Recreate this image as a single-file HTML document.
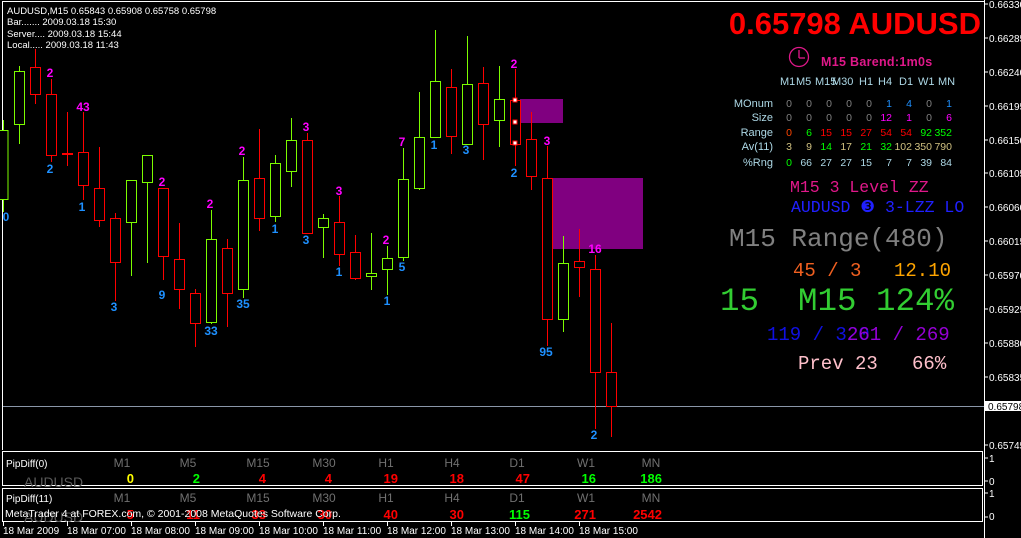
<!DOCTYPE html>
<html><head><meta charset="utf-8"><style>
html,body{margin:0;padding:0;background:#000;}
body{width:1021px;height:538px;overflow:hidden;position:relative;}
svg{position:absolute;left:0;top:0;}
text{font-family:"Liberation Sans",sans-serif;}
.m{font-family:"Liberation Mono",monospace;}
</style></head><body>
<svg width="1021" height="538" viewBox="0 0 1021 538" xmlns="http://www.w3.org/2000/svg">
<rect width="1021" height="538" fill="#000"/>
<line x1="2.5" y1="1" x2="2.5" y2="450" stroke="#fff"/>
<line x1="2" y1="1.5" x2="984" y2="1.5" stroke="#fff"/>
<line x1="984.5" y1="0" x2="984.5" y2="538" stroke="#fff"/>
<rect x="520" y="99" width="43" height="24" fill="#800080"/>
<rect x="553" y="178" width="90" height="71" fill="#800080"/>
<line x1="3" y1="406.5" x2="984" y2="406.5" stroke="#8a96a8"/>
<g id="candles" stroke-width="1" fill="#000">
<g stroke="#7cfc00">
<line x1="3.5" y1="120" x2="3.5" y2="212"/><rect x="-2" y="130.5" width="10" height="69"/>
<line x1="19.5" y1="66" x2="19.5" y2="144"/><rect x="14.5" y="71.5" width="10" height="53"/>
<line x1="131.5" y1="203" x2="131.5" y2="276"/><rect x="126.5" y="180.5" width="10" height="42"/>
<line x1="147.5" y1="183" x2="147.5" y2="263"/><rect x="142.5" y="155.5" width="10" height="27"/>
<line x1="211.5" y1="210" x2="211.5" y2="324"/><rect x="206.5" y="239.5" width="10" height="83"/>
<line x1="243.5" y1="157" x2="243.5" y2="298"/><rect x="238.5" y="180.5" width="10" height="109"/>
<line x1="275.5" y1="155" x2="275.5" y2="222"/><rect x="270.5" y="163.5" width="10" height="53"/>
<line x1="291.5" y1="118" x2="291.5" y2="187"/><rect x="286.5" y="140.5" width="10" height="31"/>
<line x1="323.5" y1="214" x2="323.5" y2="258"/><rect x="318.5" y="218.5" width="10" height="9"/>
<line x1="371.5" y1="233" x2="371.5" y2="290"/><rect x="366.5" y="273.5" width="10" height="3"/>
<line x1="387.5" y1="246" x2="387.5" y2="295"/><rect x="382.5" y="258.5" width="10" height="11"/>
<line x1="403.5" y1="148" x2="403.5" y2="261"/><rect x="398.5" y="179.5" width="10" height="78"/>
<line x1="419.5" y1="92" x2="419.5" y2="190"/><rect x="414.5" y="137.5" width="10" height="51"/>
<line x1="435.5" y1="30" x2="435.5" y2="137"/><rect x="430.5" y="81.5" width="10" height="56"/>
<line x1="467.5" y1="36" x2="467.5" y2="144"/><rect x="462.5" y="84.5" width="10" height="60"/>
<line x1="499.5" y1="66" x2="499.5" y2="147"/><rect x="494.5" y="99.5" width="10" height="21"/>
<line x1="563.5" y1="236" x2="563.5" y2="332"/><rect x="558.5" y="263.5" width="10" height="56"/>
</g>
<g stroke="#ff0000">
<line x1="35.5" y1="49" x2="35.5" y2="104"/><rect x="30.5" y="67.5" width="10" height="27"/>
<line x1="51.5" y1="79" x2="51.5" y2="162"/><rect x="46.5" y="94.5" width="10" height="61"/>
<line x1="67.5" y1="112" x2="67.5" y2="166"/><rect x="62.5" y="153.5" width="10" height="1"/>
<line x1="83.5" y1="112" x2="83.5" y2="200"/><rect x="78.5" y="152.5" width="10" height="33"/>
<line x1="99.5" y1="147" x2="99.5" y2="227"/><rect x="94.5" y="188.5" width="10" height="32"/>
<line x1="115.5" y1="213" x2="115.5" y2="301"/><rect x="110.5" y="218.5" width="10" height="44"/>
<line x1="163.5" y1="188" x2="163.5" y2="280"/><rect x="158.5" y="188.5" width="10" height="68"/>
<line x1="179.5" y1="223" x2="179.5" y2="309"/><rect x="174.5" y="259.5" width="10" height="30"/>
<line x1="195.5" y1="289" x2="195.5" y2="347"/><rect x="190.5" y="293.5" width="10" height="30"/>
<line x1="227.5" y1="239" x2="227.5" y2="327"/><rect x="222.5" y="248.5" width="10" height="45"/>
<line x1="259.5" y1="129" x2="259.5" y2="231"/><rect x="254.5" y="178.5" width="10" height="40"/>
<line x1="307.5" y1="133" x2="307.5" y2="233"/><rect x="302.5" y="140.5" width="10" height="93"/>
<line x1="339.5" y1="196" x2="339.5" y2="266"/><rect x="334.5" y="222.5" width="10" height="32"/>
<line x1="355.5" y1="235" x2="355.5" y2="280"/><rect x="350.5" y="252.5" width="10" height="26"/>
<line x1="451.5" y1="69" x2="451.5" y2="154"/><rect x="446.5" y="87.5" width="10" height="49"/>
<line x1="483.5" y1="67" x2="483.5" y2="160"/><rect x="478.5" y="83.5" width="10" height="41"/>
<line x1="515.5" y1="69" x2="515.5" y2="166"/><rect x="510.5" y="100.5" width="10" height="44"/>
<line x1="531.5" y1="112" x2="531.5" y2="190"/><rect x="526.5" y="139.5" width="10" height="37"/>
<line x1="547.5" y1="146" x2="547.5" y2="346"/><rect x="542.5" y="178.5" width="10" height="141"/>
<line x1="579.5" y1="229" x2="579.5" y2="297"/><rect x="574.5" y="261.5" width="10" height="6"/>
<line x1="595.5" y1="255" x2="595.5" y2="429"/><rect x="590.5" y="269.5" width="10" height="103"/>
<line x1="611.5" y1="323" x2="611.5" y2="437"/><rect x="606.5" y="372.5" width="10" height="34"/>
</g>
<g fill="#fff" stroke="#ff0000"><rect x="513" y="98" width="4" height="4"/><rect x="513" y="120" width="4" height="4"/><rect x="513" y="141" width="4" height="4"/></g>
</g>
<g font-size="12" font-weight="bold" text-anchor="middle" fill="#ff00ff">
<text x="50" y="77">2</text><text x="83" y="111">43</text><text x="162" y="186">2</text><text x="210" y="208">2</text><text x="242" y="155">2</text><text x="306" y="131">3</text><text x="339" y="195">3</text><text x="386" y="244">2</text><text x="402" y="146">7</text><text x="514" y="68">2</text><text x="547" y="145">3</text><text x="595" y="253">16</text>
</g>
<g font-size="12" font-weight="bold" text-anchor="middle" fill="#1e90ff">
<text x="50" y="173">2</text><text x="82" y="211">1</text><text x="6" y="221">0</text><text x="114" y="311">3</text><text x="162" y="299">9</text><text x="211" y="335">33</text><text x="243" y="308">35</text><text x="275" y="233">1</text><text x="306" y="244">3</text><text x="339" y="276">1</text><text x="387" y="305">1</text><text x="402" y="271">5</text><text x="434" y="149">1</text><text x="466" y="154">3</text><text x="514" y="177">2</text><text x="546" y="356">95</text><text x="594" y="439">2</text>
</g>
<g font-size="9.5" fill="#fff">
<text x="7" y="14">AUDUSD,M15  0.65843 0.65908 0.65758 0.65798</text>
<text x="7" y="25">Bar....... 2009.03.18 15:30</text>
<text x="7" y="37">Server.... 2009.03.18 15:44</text>
<text x="7" y="48">Local..... 2009.03.18 11:43</text>
</g>
<g font-size="10" fill="#fff" stroke="none">
<text x="989" y="8">0.66330</text><text x="989" y="42">0.66285</text><text x="989" y="76">0.66240</text><text x="989" y="110">0.66195</text><text x="989" y="144">0.66150</text><text x="989" y="177">0.66105</text><text x="989" y="211">0.66060</text><text x="989" y="245">0.66015</text><text x="989" y="279">0.65970</text><text x="989" y="313">0.65925</text><text x="989" y="347">0.65880</text><text x="989" y="381">0.65835</text><text x="989" y="449">0.65745</text>
</g>
<g stroke="#fff"><line x1="984" y1="4" x2="988" y2="4"/><line x1="984" y1="38" x2="988" y2="38"/><line x1="984" y1="72" x2="988" y2="72"/><line x1="984" y1="106" x2="988" y2="106"/><line x1="984" y1="140" x2="988" y2="140"/><line x1="984" y1="173" x2="988" y2="173"/><line x1="984" y1="207" x2="988" y2="207"/><line x1="984" y1="241" x2="988" y2="241"/><line x1="984" y1="275" x2="988" y2="275"/><line x1="984" y1="309" x2="988" y2="309"/><line x1="984" y1="343" x2="988" y2="343"/><line x1="984" y1="377" x2="988" y2="377"/><line x1="984" y1="445" x2="988" y2="445"/></g>
<rect x="985" y="401" width="36" height="10" fill="#fff"/>
<text x="988" y="410" font-size="10" fill="#000">0.65798</text>
<text x="981" y="34" font-size="31" font-weight="bold" fill="#ff0000" text-anchor="end">0.65798 AUDUSD</text>
<g stroke="#e0188a" fill="none" stroke-width="1.3"><circle cx="799" cy="57" r="9.5"/><line x1="799" y1="50" x2="799" y2="58"/><line x1="799" y1="58" x2="805" y2="58"/></g>
<text x="821" y="66" font-size="12.5" font-weight="bold" fill="#e0188a" letter-spacing="0.3">M15 Barend:1m0s</text>
<g font-size="11" fill="#add8e6">
<text x="780" y="85">M1</text><text x="796" y="85">M5</text><text x="815" y="85">M15</text><text x="832" y="85">M30</text><text x="859" y="85">H1</text><text x="878" y="85">H4</text><text x="899" y="85">D1</text><text x="918" y="85">W1</text><text x="938" y="85">MN</text>
<g text-anchor="end"><text x="773" y="107">MOnum</text><text x="773" y="121">Size</text><text x="773" y="136">Range</text><text x="773" y="150">Av(11)</text><text x="773" y="166">%Rng</text></g>
</g>
<g font-size="10.5" text-anchor="end">
<g fill="#808080"><text x="792" y="107">0</text><text x="812" y="107">0</text><text x="832" y="107">0</text><text x="852" y="107">0</text><text x="872" y="107">0</text><text x="932" y="107">0</text>
<text x="792" y="121">0</text><text x="812" y="121">0</text><text x="832" y="121">0</text><text x="852" y="121">0</text><text x="872" y="121">0</text><text x="932" y="121">0</text></g>
<g fill="#1e90ff"><text x="892" y="107">1</text><text x="912" y="107">4</text><text x="952" y="107">1</text></g>
<g fill="#ff00ff"><text x="892" y="121">12</text><text x="912" y="121">1</text><text x="952" y="121">6</text></g>
<text x="792" y="136" fill="#ff4500">0</text><text x="812" y="136" fill="#00ff00">6</text>
<g fill="#ff0000"><text x="832" y="136">15</text><text x="852" y="136">15</text><text x="872" y="136">27</text><text x="892" y="136">54</text><text x="912" y="136">54</text></g>
<text x="932" y="136" fill="#00ff00">92</text><text x="952" y="136" fill="#00ff00">352</text>
<g fill="#d0c080"><text x="792" y="150">3</text><text x="812" y="150">9</text><text x="852" y="150">17</text><text x="912" y="150">102</text><text x="932" y="150">350</text><text x="952" y="150">790</text></g>
<g fill="#00ff00"><text x="832" y="150">14</text><text x="872" y="150">21</text><text x="892" y="150">32</text><text x="792" y="166">0</text></g>
<g fill="#add8e6"><text x="812" y="166">66</text><text x="832" y="166">27</text><text x="852" y="166">27</text><text x="872" y="166">15</text><text x="892" y="166">7</text><text x="912" y="166">7</text><text x="932" y="166">39</text><text x="952" y="166">84</text></g>
</g>
<text class="m" x="790" y="192" font-size="16.5" fill="#e0188a" xml:space="preserve">M15 3 Level ZZ</text>
<text class="m" x="791" y="212" font-size="16.5" fill="#2020ff" xml:space="preserve">AUDUSD ❸ 3-LZZ LO</text>
<text class="m" x="729" y="246" font-size="26" fill="#808080" xml:space="preserve">M15 Range(480)</text>
<text class="m" x="793" y="276" font-size="19" fill="#f06020" xml:space="preserve">45 / 3</text>
<text class="m" x="894" y="276" font-size="19" fill="#ffa500">12.10</text>
<text class="m" x="720" y="310" font-size="32.5" fill="#32cd32" xml:space="preserve">15  M15 124%</text>
<text class="m" x="767" y="340" font-size="19" fill="#1010e0" xml:space="preserve">119 / 320</text>
<text class="m" x="847" y="340" font-size="19" fill="#9400d3" xml:space="preserve">261 / 269</text>
<text class="m" x="798" y="369" font-size="19" fill="#ffc0cb" xml:space="preserve">Prev 23   66%</text>
<rect x="2.5" y="451.5" width="980" height="34" fill="none" stroke="#fff"/>
<rect x="2.5" y="488.5" width="980" height="33" fill="none" stroke="#fff"/>
<g stroke="#fff"><line x1="984" y1="458" x2="988" y2="458"/><line x1="984" y1="481" x2="988" y2="481"/><line x1="984" y1="493" x2="988" y2="493"/><line x1="984" y1="517" x2="988" y2="517"/></g>
<g font-size="10" fill="#fff"><text x="989" y="462">1</text><text x="989" y="485">0</text><text x="989" y="497">1</text><text x="989" y="520">0</text></g>
<text x="24" y="487" font-size="14" fill="#5a5a5a">AUDUSD</text>
<text x="24" y="522" font-size="14" fill="#5a5a5a">AUDUSD</text>
<g font-size="10" fill="#fff"><text x="6" y="467">PipDiff(0)</text><text x="6" y="502">PipDiff(11)</text></g>
<g font-size="12" fill="#707070" text-anchor="middle">
<text x="122" y="467">M1</text><text x="188" y="467">M5</text><text x="258" y="467">M15</text><text x="324" y="467">M30</text><text x="386" y="467">H1</text><text x="452" y="467">H4</text><text x="517" y="467">D1</text><text x="586" y="467">W1</text><text x="651" y="467">MN</text>
<text x="122" y="502">M1</text><text x="188" y="502">M5</text><text x="258" y="502">M15</text><text x="324" y="502">M30</text><text x="386" y="502">H1</text><text x="452" y="502">H4</text><text x="517" y="502">D1</text><text x="586" y="502">W1</text><text x="651" y="502">MN</text>
</g>
<g class="m" font-size="13" font-weight="bold" text-anchor="end">
<text x="134" y="483" fill="#ffff00">0</text><text x="200" y="483" fill="#00ff00">2</text><text x="266" y="483" fill="#ff0000">4</text><text x="332" y="483" fill="#ff0000">4</text><text x="398" y="483" fill="#ff0000">19</text><text x="464" y="483" fill="#ff0000">18</text><text x="530" y="483" fill="#ff0000">47</text><text x="596" y="483" fill="#00ff00">16</text><text x="662" y="483" fill="#00ff00">186</text>
<text x="134" y="519" fill="#ff0000">5</text><text x="200" y="519" fill="#ff0000">11</text><text x="266" y="519" fill="#ff0000">33</text><text x="332" y="519" fill="#ff0000">30</text><text x="398" y="519" fill="#ff0000">40</text><text x="464" y="519" fill="#ff0000">30</text><text x="530" y="519" fill="#00ff00">115</text><text x="596" y="519" fill="#ff0000">271</text><text x="662" y="519" fill="#ff0000">2542</text>
</g>
<text x="5" y="517" font-size="10.5" fill="#fff">MetaTrader 4 at FOREX.com, © 2001-2008 MetaQuotes Software Corp.</text>
<g stroke="#fff"><line x1="3.5" y1="521" x2="3.5" y2="526"/><line x1="67.5" y1="521" x2="67.5" y2="526"/><line x1="131.5" y1="521" x2="131.5" y2="526"/><line x1="195.5" y1="521" x2="195.5" y2="526"/><line x1="259.5" y1="521" x2="259.5" y2="526"/><line x1="323.5" y1="521" x2="323.5" y2="526"/><line x1="387.5" y1="521" x2="387.5" y2="526"/><line x1="451.5" y1="521" x2="451.5" y2="526"/><line x1="515.5" y1="521" x2="515.5" y2="526"/><line x1="579.5" y1="521" x2="579.5" y2="526"/></g>
<g font-size="10" fill="#fff">
<text x="3" y="534">18 Mar 2009</text><text x="67" y="534">18 Mar 07:00</text><text x="131" y="534">18 Mar 08:00</text><text x="195" y="534">18 Mar 09:00</text><text x="259" y="534">18 Mar 10:00</text><text x="323" y="534">18 Mar 11:00</text><text x="387" y="534">18 Mar 12:00</text><text x="451" y="534">18 Mar 13:00</text><text x="515" y="534">18 Mar 14:00</text><text x="579" y="534">18 Mar 15:00</text>
</g>
</svg>
</body></html>
